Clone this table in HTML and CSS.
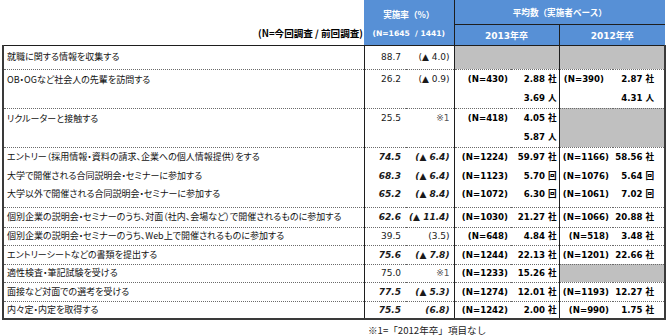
FILE: index.html
```html
<!DOCTYPE html>
<html lang="ja">
<head>
<meta charset="utf-8">
<link rel="stylesheet" href="styles.css">
</head>
<body>
<div class="wrap">
<table class="t">
<colgroup><col class="c-lab"><col class="c-rv"><col class="c-rc"><col class="c-n13"><col class="c-v13"><col class="c-n12"><col class="c-v12"></colgroup>
<thead>
<tr class="h1"><th class="hl"></th><th class="hb hr" colspan="2">実施率（%）</th><th class="hb hd ha" colspan="4">平均数（実施者ベース）</th></tr>
<tr class="h2"><th class="hl">(N=今回調査 / 前回調査)</th><th class="hb hn" colspan="2">(N=1645 &nbsp;/ 1441)</th><th class="hb hd hy" colspan="2">2013年卒</th><th class="hb hd hy" colspan="2">2012年卒</th></tr>
</thead>
<tbody>
<tr class="r1 dot"><td class="lab">就職に関する情報を収集する</td><td class="rv">88.7</td><td class="rc">(▲ 4.0)</td><td class="gray gl" colspan="2"></td><td class="gray gl" colspan="2"></td></tr>
<tr class="r2 dot two"><td class="lab">OB・OGなど社会人の先輩を訪問する</td><td class="rv">26.2</td><td class="rc">(▲ 0.9)</td><td class="n13">(N=430)</td><td class="v13">2.88 社<br>3.69 人</td><td class="n12 nl">(N=390)</td><td class="v12">2.87 社<br>4.31 人</td></tr>
<tr class="r2 dot two"><td class="lab">リクルーターと接触する</td><td class="rv">25.5</td><td class="rc note">※1</td><td class="n13">(N=418)</td><td class="v13">4.05 社<br>5.87 人</td><td class="gray gl" colspan="2"></td></tr>
<tr class="r19 ib"><td class="lab">エントリー（採用情報・資料の請求、企業への個人情報提供）をする</td><td class="rv">74.5</td><td class="rc">(▲ 6.4)</td><td class="n13">(N=1224)</td><td class="v13">59.97 社</td><td class="n12">(N=1166)</td><td class="v12">58.56 社</td></tr>
<tr class="r19 ib"><td class="lab">大学で開催される合同説明会・セミナーに参加する</td><td class="rv">68.3</td><td class="rc">(▲ 6.4)</td><td class="n13">(N=1123)</td><td class="v13">5.70 回</td><td class="n12">(N=1076)</td><td class="v12">5.64 回</td></tr>
<tr class="r22 dot ib up"><td class="lab">大学以外で開催される合同説明会・セミナーに参加する</td><td class="rv">65.2</td><td class="rc">(▲ 8.4)</td><td class="n13">(N=1072)</td><td class="v13">6.30 回</td><td class="n12">(N=1061)</td><td class="v12">7.02 回</td></tr>
<tr class="r20 dot ib"><td class="lab">個別企業の説明会・セミナーのうち、対面（社内、会場など）で開催されるものに参加する</td><td class="rv">62.6</td><td class="rc">(▲ 11.4)</td><td class="n13">(N=1030)</td><td class="v13">21.27 社</td><td class="n12">(N=1066)</td><td class="v12">20.88 社</td></tr>
<tr class="r18 dot"><td class="lab">個別企業の説明会・セミナーのうち、Web上で開催されるものに参加する</td><td class="rv">39.5</td><td class="rc">(3.5)</td><td class="n13">(N=648)</td><td class="v13">4.84 社</td><td class="n12">(N=518)</td><td class="v12">3.48 社</td></tr>
<tr class="r19 dot ib"><td class="lab">エントリーシートなどの書類を提出する</td><td class="rv">75.6</td><td class="rc">(▲ 7.8)</td><td class="n13">(N=1244)</td><td class="v13">22.13 社</td><td class="n12">(N=1201)</td><td class="v12">22.66 社</td></tr>
<tr class="r18 dot"><td class="lab">適性検査・筆記試験を受ける</td><td class="rv">75.0</td><td class="rc note">※1</td><td class="n13">(N=1233)</td><td class="v13">15.26 社</td><td class="gray gl" colspan="2"></td></tr>
<tr class="r19 dot ib"><td class="lab">面接など対面での選考を受ける</td><td class="rv">77.5</td><td class="rc">(▲ 5.3)</td><td class="n13">(N=1274)</td><td class="v13">12.01 社</td><td class="n12">(N=1193)</td><td class="v12">12.27 社</td></tr>
<tr class="r18 last ib"><td class="lab">内々定・内定を取得する</td><td class="rv">75.5</td><td class="rc">(6.8)</td><td class="n13">(N=1242)</td><td class="v13">2.00 社</td><td class="n12">(N=990)</td><td class="v12">1.75 社</td></tr>
</tbody>
</table>
<p class="foot">※1=「2012年卒」項目なし</p>
</div>
</body>
</html>
```

FILE: styles.css
```css
* { box-sizing: border-box; }
html, body { margin: 0; padding: 0; background: #fff; }
body {
  font-family: "DejaVu Sans", "Noto Sans CJK JP", sans-serif;
  color: #000;
}
.wrap { padding-left: 2px; }
.t {
  border-collapse: collapse;
  table-layout: fixed;
  width: 662px;
}
.c-lab { width: 361px; }
.c-rv { width: 42px; }
.c-rc { width: 48px; }
.c-n13 { width: 57px; }
.c-v13 { width: 48px; }
.c-n12 { width: 54px; }
.c-v12 { width: 52px; }

th, td { padding: 0; white-space: nowrap; }

/* header */
.h1 { height: 24px; }
.h2 { height: 21px; }
.hl {
  text-align: right;
  padding-right: 1px;
  font-family: "Noto Sans CJK JP", sans-serif;
  font-size: 9.6px;
  font-weight: 700;
  vertical-align: middle;
  padding-bottom: 3px;
}
.hb {
  background: #5790d6;
  color: #fff;
  font-family: "Noto Sans CJK JP", sans-serif;
  font-weight: 700;
  font-size: 8.6px;
  text-align: center;
  vertical-align: middle;
}
.hr { padding-top: 3px; }
.hd { border-left: 1px solid #1e1e1e; }
.ha { border-bottom: 1px solid #1e1e1e; }
.hn {
  font-family: "DejaVu Sans", sans-serif;
  font-size: 7.6px;
  padding-bottom: 1px;
}
.hy {
  font-family: "DejaVu Sans", "Noto Sans CJK JP", sans-serif;
  font-size: 9px;
  padding-top: 2px;
}

/* body */
tbody tr:first-child td { border-top: 1px solid #1e1e1e; }
tbody td:first-child { border-left: 2px solid #3a3a3a; }
tbody td:last-child { border-right: 2px solid #3a3a3a; }
tbody tr.last td { border-bottom: 2px solid #3a3a3a; }
tbody tr.dot td { border-bottom: 1px dotted #6a6a6a; }

.r1 { height: 24px; }
.r2 { height: 38px; }
.r18 { height: 18px; }
.r19 { height: 19px; }
.r20 { height: 20px; }
.r22 { height: 22px; }

td { vertical-align: middle; line-height: 12px; }
.two td { vertical-align: top; line-height: 19px; }
.up td { padding-bottom: 3px; }

.lab {
  font-family: "Noto Sans CJK JP", sans-serif;
  font-size: 9px;
  font-feature-settings: "palt";
  padding-left: 3px;
  color: #111;
}
.rv, .rc {
  font-size: 9px;
  text-align: right;
  color: #1a1a1a;
}
.rv { border-left: 1px solid #1e1e1e; padding-right: 5px; }
.rc { padding-right: 4px; }
.note { color: #555; font-size: 9px; }
.ib .rv, .ib .rc { font-style: italic; font-weight: 700; }

.n13, .v13, .n12, .v12 {
  font-size: 8.6px;
  font-weight: 700;
  text-align: right;
}
.n13 { border-left: 1px solid #1e1e1e; padding-right: 3px; }
.v13 { padding-right: 2px; }
.n12 { border-left: 1px solid #1e1e1e; padding-right: 4px; }
.n12.nl { padding-right: 9px; }
.v12 { padding-right: 10px; }

.gray { background: #c0c0c0; }
.gl { border-left: 1px solid #1e1e1e; }

.foot {
  margin: 4px 0 0 366px;
  font-family: "Noto Sans CJK JP", sans-serif;
  font-size: 9.6px;
  line-height: 12px;
  color: #222;
}
```
